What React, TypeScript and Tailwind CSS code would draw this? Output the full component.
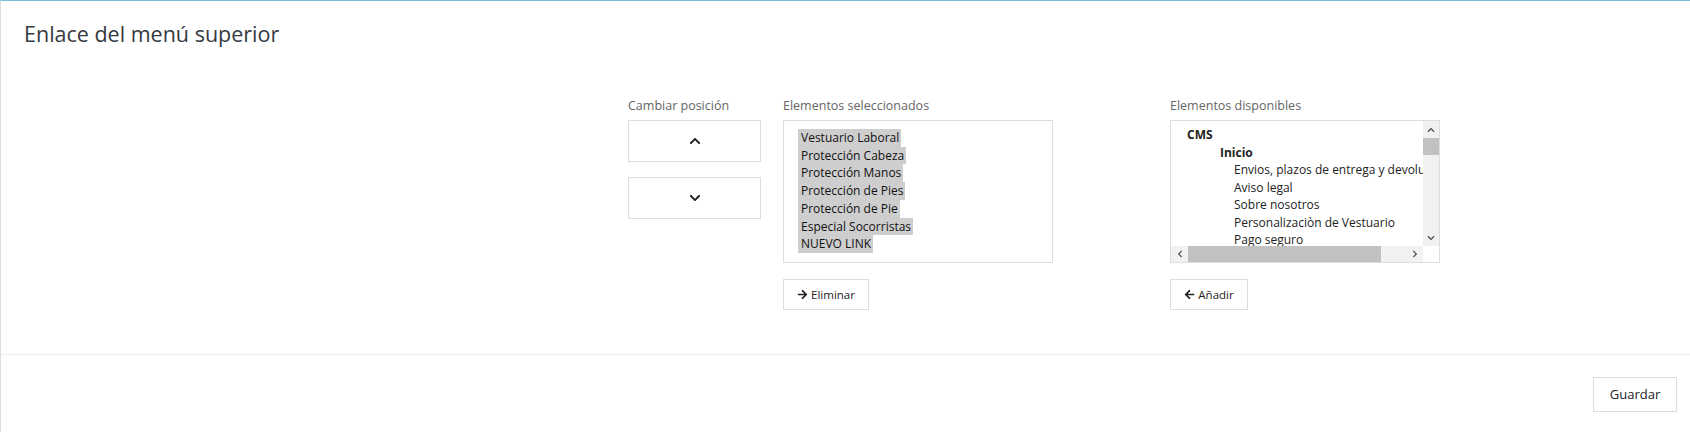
import { FaArrowLeft, FaArrowRight, FaChevronDown, FaChevronUp } from 'react-icons/fa'

const selected = [
  'Vestuario Laboral',
  'Protección Cabeza',
  'Protección Manos',
  'Protección de Pies',
  'Protección de Pie',
  'Especial Socorristas',
  'NUEVO LINK',
]

const available = [
  { label: 'CMS', indent: 'pl-[16px]', bold: true },
  { label: 'Inicio', indent: 'pl-[49px]', bold: true },
  { label: 'Envios, plazos de entrega y devoluciones', indent: 'pl-[63px]', bold: false },
  { label: 'Aviso legal', indent: 'pl-[63px]', bold: false },
  { label: 'Sobre nosotros', indent: 'pl-[63px]', bold: false },
  { label: 'Personalizaciòn de Vestuario', indent: 'pl-[63px]', bold: false },
  { label: 'Pago seguro', indent: 'pl-[63px]', bold: false },
]

export default function App() {
  return (
    <div className="h-[432px] w-[1690px] border-t border-l border-t-[#72c3db] border-l-[#dddddd] bg-white font-['Open_Sans',sans-serif] text-[#363a41]">
      {/* Header */}
      <div className="h-[60px] pl-[23px] pt-[19px]">
        <h2 className="text-[21.5px] leading-[28px] text-[#363a41]">Enlace del menú superior</h2>
      </div>

      {/* Body */}
      <div className="flex h-[293px] pl-[627px] pt-[36px]">
        <div className="w-[133px]">
          <div className="h-[23px] text-[12.5px] leading-[18px] text-[#666]">Cambiar posición</div>
          <button className="flex h-[42px] w-[133px] items-center justify-center border border-[#dddddd] bg-white">
            <FaChevronUp className="h-[12px] w-[12px] text-[#222]" />
          </button>
          <button className="mt-[15px] flex h-[42px] w-[133px] items-center justify-center border border-[#dddddd] bg-white">
            <FaChevronDown className="h-[12px] w-[12px] text-[#222]" />
          </button>
        </div>

        <div className="ml-[22px] w-[270px]">
          <div className="h-[23px] text-[12.5px] leading-[18px] text-[#666]">Elementos seleccionados</div>
          <div className="h-[143px] border border-[#dddddd] pl-[14px] pt-[8px]">
            {selected.map((s) => (
              <div key={s} className="flex">
                <span className="bg-[#cecece] pl-[3px] pr-[2px] text-[12px] leading-[17.7px] text-[#111]">
                  {s}
                </span>
              </div>
            ))}
          </div>
          <button className="mt-[16px] flex h-[31px] w-[86px] items-center justify-center gap-[3px] border border-[#dddddd] bg-white text-[11.5px] text-[#222]">
            <FaArrowRight className="h-[11px] w-[11px]" />
            Eliminar
          </button>
        </div>

        <div className="ml-[117px] w-[270px]">
          <div className="h-[23px] text-[12.5px] leading-[18px] text-[#666]">Elementos disponibles</div>
          <div className="flex h-[143px] flex-col border border-[#dddddd]">
            <div className="flex h-[125px]">
              <div className="flex-1 overflow-hidden pt-[5px]">
                {available.map((a) => (
                  <div
                    key={a.label}
                    className={`${a.indent} whitespace-nowrap text-[12px] leading-[17.5px] text-[#222] ${a.bold ? 'font-bold' : ''}`}
                  >
                    {a.label}
                  </div>
                ))}
              </div>
              <div className="flex w-[16px] flex-col items-center bg-[#f1f1f1]">
                <div className="flex h-[17px] items-center justify-center">
                  <FaChevronUp className="h-[8px] w-[8px] text-[#505050]" />
                </div>
                <div className="h-[17px] w-full bg-[#c1c1c1]" />
                <div className="flex-1" />
                <div className="flex h-[17px] items-center justify-center">
                  <FaChevronDown className="h-[8px] w-[8px] text-[#505050]" />
                </div>
              </div>
            </div>
            <div className="flex h-[16px] items-center bg-[#f1f1f1]">
              <div className="flex w-[17px] items-center justify-center">
                <FaChevronUp className="h-[8px] w-[8px] -rotate-90 text-[#505050]" />
              </div>
              <div className="h-full w-[193px] bg-[#c1c1c1]" />
              <div className="flex-1" />
              <div className="flex w-[17px] items-center justify-center">
                <FaChevronUp className="h-[8px] w-[8px] rotate-90 text-[#505050]" />
              </div>
              <div className="h-full w-[16px] bg-white" />
            </div>
          </div>
          <button className="mt-[16px] flex h-[31px] w-[78px] items-center justify-center gap-[3px] border border-[#dddddd] bg-white text-[11.5px] text-[#222]">
            <FaArrowLeft className="h-[11px] w-[11px]" />
            Añadir
          </button>
        </div>
      </div>

      {/* Footer */}
      <div className="flex h-[77px] items-start justify-end border-t border-[#eeeeee] pr-[13px] pt-[22px]">
        <button className="h-[35px] w-[84px] border border-[#dddddd] bg-white text-[13px] text-[#222]">
          Guardar
        </button>
      </div>
    </div>
  )
}
